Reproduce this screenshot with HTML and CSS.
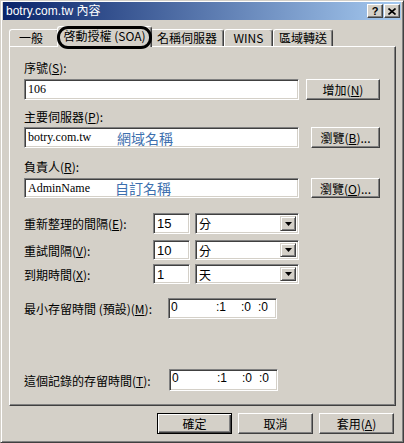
FILE: index.html
```html
<!DOCTYPE html>
<html lang="zh-Hant">
<head>
  <meta charset="UTF-8" />
  <title>botry.com.tw 內容</title>
  <link rel="stylesheet" href="styles.css">
</head>
<body>

  <div class="window">
    <div class="titlebar">
      <span class="title">botry.com.tw 內容</span>
      <div class="title-buttons">
        <span class="tbtn">?</span>
        <span class="tbtn">
          <svg width="8" height="7" viewBox="0 0 8 7"><path d="M0.5 0.5 L7.5 6.5 M7.5 0.5 L0.5 6.5" stroke="#000" stroke-width="1.6"/></svg>
        </span>
      </div>
    </div>

    <div class="content">
      <div class="tabs">
        <div class="tab tab-general">一般</div>
        <div class="tab tab-soa active">啓動授權 (SOA)</div>
        <div class="tab tab-ns">名稱伺服器</div>
        <div class="tab tab-wins">WINS</div>
        <div class="tab tab-zone">區域轉送</div>
      </div>

      <div class="panel">
        <!-- serial -->
        <div class="caption">序號(<u>S</u>):</div>
        <div class="field-row serial-row">
          <div class="textbox wide">106</div>
          <button class="btn btn-add">增加(<u>N</u>)</button>
        </div>

        <!-- primary server -->
        <div class="caption server-caption">主要伺服器(<u>P</u>):</div>
        <div class="field-row server-row">
          <div class="textbox wide"><span class="value value-server">botry.com.tw</span><span class="hint">網域名稱</span></div>
          <button class="btn btn-browse">瀏覽(<u>B</u>)...</button>
        </div>

        <!-- responsible person -->
        <div class="caption admin-caption">負責人(<u>R</u>):</div>
        <div class="field-row admin-row">
          <div class="textbox wide"><span class="value value-admin">AdminName</span><span class="hint">自訂名稱</span></div>
          <button class="btn btn-browse">瀏覽(<u>O</u>)...</button>
        </div>

        <!-- intervals -->
        <div class="interval-row refresh-row">
          <span class="interval-label">重新整理的間隔(<u>E</u>):</span>
          <div class="textbox num">15</div>
          <div class="combo"><span class="combo-text">分</span><span class="combo-arrow"><svg width="7" height="4" viewBox="0 0 7 4"><polygon points="0,0 7,0 3.5,4" fill="#000"/></svg></span></div>
        </div>
        <div class="interval-row retry-row">
          <span class="interval-label">重試間隔(<u>V</u>):</span>
          <div class="textbox num">10</div>
          <div class="combo"><span class="combo-text">分</span><span class="combo-arrow"><svg width="7" height="4" viewBox="0 0 7 4"><polygon points="0,0 7,0 3.5,4" fill="#000"/></svg></span></div>
        </div>
        <div class="interval-row expire-row">
          <span class="interval-label">到期時間(<u>X</u>):</span>
          <div class="textbox num">1</div>
          <div class="combo"><span class="combo-text">天</span><span class="combo-arrow"><svg width="7" height="4" viewBox="0 0 7 4"><polygon points="0,0 7,0 3.5,4" fill="#000"/></svg></span></div>
        </div>

        <!-- ttl -->
        <div class="ttl-row min-row">
          <span class="ttl-label">最小存留時間 (預設)(<u>M</u>):</span>
          <div class="textbox timebox"><span class="seg seg-d">0</span><span class="seg seg-h">:1</span><span class="seg seg-m">:0</span><span class="seg">:0</span></div>
        </div>
        <div class="ttl-row record-row">
          <span class="ttl-label">這個記錄的存留時間(<u>T</u>):</span>
          <div class="textbox timebox"><span class="seg seg-d">0</span><span class="seg seg-h">:1</span><span class="seg seg-m">:0</span><span class="seg">:0</span></div>
        </div>
      </div>

      <div class="footer">
        <button class="btn btn-footer default">確定</button>
        <button class="btn btn-footer">取消</button>
        <button class="btn btn-footer">套用(<u>A</u>)</button>
      </div>
    </div>
  </div>

</body>
</html>
```

FILE: styles.css
```css
:root {
  --face: #d4d0c8;
  --light: #ffffff;
  --shadow: #808080;
  --dark: #404040;
  --hint: #3d6fae;
}

* {
  box-sizing: border-box;
  margin: 0;
  padding: 0;
}

body {
  font-family: "Noto Sans CJK TC", "Liberation Sans", sans-serif;
  font-size: 12px;
  color: #000;
  background: var(--face);
}

u {
  text-decoration: underline;
  text-underline-offset: 1px;
}

.window {
  width: 404px;
  height: 443px;
  background: var(--face);
  border: 1px solid;
  border-color: var(--face) var(--dark) var(--dark) var(--face);
  box-shadow: inset 1px 1px var(--light), inset -1px -1px var(--shadow);
  padding: 1px 2px 2px 2px;
}

/* title bar */
.titlebar {
  height: 18px;
  display: flex;
  align-items: center;
  justify-content: space-between;
  padding: 0 1px 0 3px;
  background: linear-gradient(to right, #0a246a, #a6caf0);
  color: #fff;
}

.title {
  font-family: "Liberation Sans", "Noto Sans CJK TC", sans-serif;
  font-size: 12px;
  line-height: 18px;
}

.title-buttons {
  display: flex;
  gap: 1px;
}

.tbtn {
  width: 16px;
  height: 14px;
  display: flex;
  align-items: center;
  justify-content: center;
  background: var(--face);
  border: 1px solid;
  border-color: var(--light) var(--dark) var(--dark) var(--light);
  box-shadow: inset -1px -1px var(--shadow);
  color: #000;
  font: bold 11px "Liberation Sans", sans-serif;
}

/* tabs */
.content {
  padding: 6px 5px 0 6px;
}

.tabs {
  display: flex;
  align-items: flex-end;
  height: 20px;
}

.tab {
  height: 17px;
  line-height: 15px;
  text-align: center;
  white-space: nowrap;
  background: var(--face);
  border: 1px solid;
  border-bottom: 0;
  border-color: var(--light) var(--dark) var(--light) var(--light);
  box-shadow: inset -1px 0 var(--shadow);
  border-radius: 3px 3px 0 0;
}

.tab-general { width: 50px; padding-right: 6px; }
.tab-ns { width: 74px; }
.tab-wins { width: 49px; }
.tab-zone { width: 60px; }

.tab.active {
  width: 95px;
  height: 21px;
  line-height: 17px;
  margin: 0 -2px -1px;
  position: relative;
  z-index: 1;
}

/* hand-drawn marker round the active tab */
.tab.active::after {
  content: "";
  position: absolute;
  left: -1px;
  right: -1px;
  top: -1px;
  bottom: -2px;
  border: 3px solid #000;
  border-radius: 11px;
}

/* panel */
.panel {
  height: 360px;
  border: 1px solid;
  border-color: var(--light) var(--dark) var(--dark) var(--light);
  box-shadow: inset -1px -1px var(--shadow);
  padding: 14px 0 0 14px;
}

.caption {
  line-height: 14px;
  height: 14px;
}

.server-caption { margin-top: 10px; }
.admin-caption { margin-top: 12px; }

.field-row {
  width: 356px;
  height: 21px;
  display: flex;
  justify-content: space-between;
}

.serial-row { margin-top: 4px; }
.server-row { margin-top: 3px; }
.admin-row { margin-top: 4px; height: 20px; }

.textbox {
  height: 100%;
  display: flex;
  align-items: center;
  padding: 0 3px;
  background: #fff;
  border: 1px solid;
  border-color: var(--shadow) var(--light) var(--light) var(--shadow);
  box-shadow: inset 1px 1px var(--dark), inset -1px -1px var(--face);
  font-family: "Liberation Serif", "Noto Sans CJK TC", serif;
  font-size: 12px;
  white-space: nowrap;
}

.textbox.wide { width: 275px; }

.value-server { width: 89px; }
.value-admin { width: 87px; }

.hint {
  color: var(--hint);
  font-family: "Noto Sans CJK TC", sans-serif;
  font-size: 14px;
  line-height: 16px;
}

.btn {
  height: 100%;
  background: var(--face);
  border: 1px solid;
  border-color: var(--light) var(--dark) var(--dark) var(--light);
  box-shadow: inset -1px -1px var(--shadow);
  font-family: "Noto Sans CJK TC", "Liberation Sans", sans-serif;
  font-size: 12px;
  color: #000;
}

.btn-add { width: 74px; }
.btn-browse { width: 69px; }

/* interval rows */
.interval-row {
  display: flex;
  align-items: center;
  height: 20px;
}

.refresh-row { margin-top: 15px; height: 21px; }
.retry-row { margin-top: 6px; }
.expire-row { margin-top: 4px; }

.interval-label { width: 129px; }

.textbox.num {
  width: 37px;
  font-family: "Liberation Sans", sans-serif;
  font-size: 13px;
}

.combo {
  width: 104px;
  height: 100%;
  margin-left: 5px;
  display: flex;
  align-items: center;
  padding: 2px 2px 2px 3px;
  background: #fff;
  border: 1px solid;
  border-color: var(--shadow) var(--light) var(--light) var(--shadow);
  box-shadow: inset 1px 1px var(--dark), inset -1px -1px var(--face);
}

.combo-text { flex: 1; }

.combo-arrow {
  width: 16px;
  height: 100%;
  display: flex;
  align-items: center;
  justify-content: center;
  background: var(--face);
  border: 1px solid;
  border-color: var(--face) var(--dark) var(--dark) var(--face);
  box-shadow: inset 1px 1px var(--light), inset -1px -1px var(--shadow);
}

/* ttl rows */
.ttl-row {
  display: flex;
  align-items: center;
  height: 21px;
}

.min-row { margin-top: 14px; }
.record-row { margin-top: 50px; height: 22px; }

.ttl-label { width: 144px; }
.record-row .ttl-label { width: 145px; }

.textbox.timebox {
  width: 109px;
  padding-left: 2px;
  align-items: flex-start;
  padding-top: 1px;
  font-family: "Liberation Sans", sans-serif;
}

.seg-d { width: 45px; }
.seg-h { width: 25px; }
.seg-m { width: 17px; }

/* dialog buttons */
.footer {
  display: flex;
  justify-content: flex-end;
  gap: 6px;
  padding: 7px 2px 0 0;
}

.btn-footer {
  width: 75px;
  height: 21px;
}

.btn.default {
  border-color: #000;
  box-shadow: inset 1px 1px var(--light), inset -1px -1px var(--dark), inset -2px -2px var(--shadow);
}
```
